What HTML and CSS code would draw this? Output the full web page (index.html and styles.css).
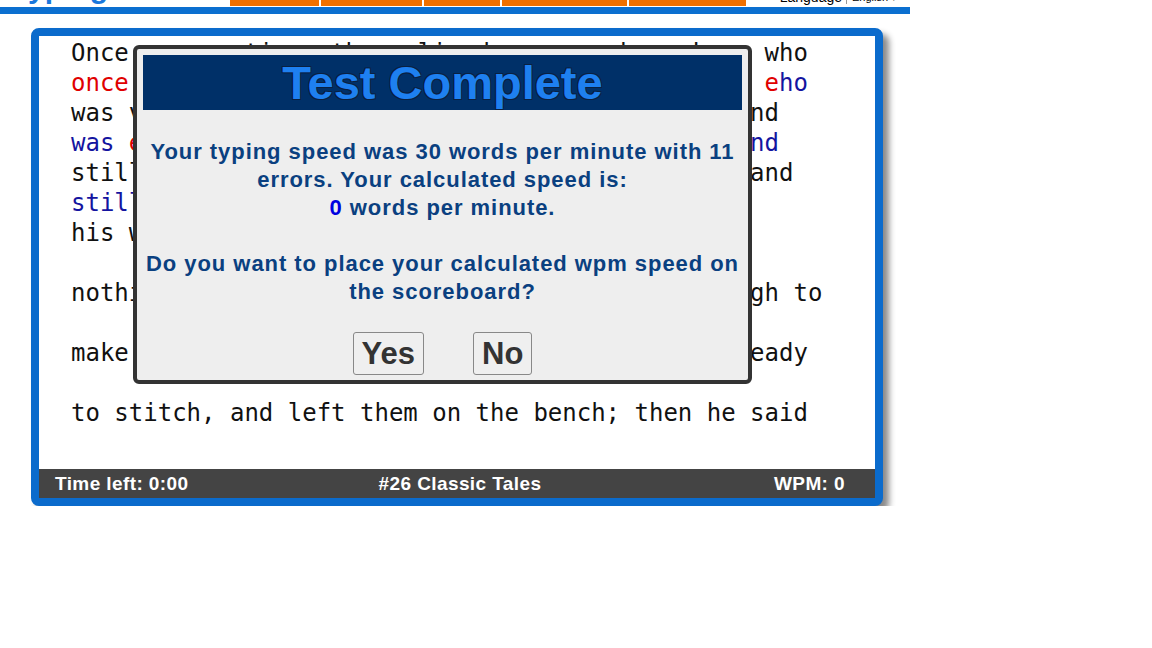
FILE: index.html
```html
<!DOCTYPE html>
<html lang="en">
<head>
    <meta charset="UTF-8">
    <title>Typing Test</title>
    <link rel="stylesheet" href="styles.css">
</head>
<body>
    <div class="site-header">
        <div class="top-row">
            <div class="logo">typingtest</div>
            <div class="nav">
                <span class="tab tab-1">Home</span>
                <span class="tab tab-2">Typing Test</span>
                <span class="tab tab-3">Games</span>
                <span class="tab tab-4">Scoreboard</span>
                <span class="tab tab-5">Lessons</span>
            </div>
            <div class="lang">
                <span class="lang-label">Language</span>
                <span class="lang-select">English &#9662;</span>
            </div>
        </div>
        <div class="blue-bar"></div>
    </div>

    <div class="test-box">
        <div class="test-text">
            <div class="line">Once upon a time, there lived a poor shoemaker, who</div>
            <div class="line typed"><span class="err">once</span> upon a time, there lived a poor shoemaker, <span class="err">e</span>ho</div>
            <div class="line">was very honest, and worked very hard indeed, and</div>
            <div class="line typed">was <span class="err">e</span>ery honest, and worked very hard indeed, and</div>
            <div class="line">still he could never earn enough to live upon, and</div>
            <div class="line typed">still</div>
            <div class="line">his wife and he had but little to eat;</div>
            <div class="line"></div>
            <div class="line">nothing was left but a bit of leather just enough to</div>
            <div class="line"></div>
            <div class="line">make one pair of shoes. He cut these out, all ready</div>
            <div class="line"></div>
            <div class="line">to stitch, and left them on the bench; then he said</div>
        </div>
        <div class="status-bar">
            <span class="time-left">Time left: 0:00</span>
            <span class="passage">#26 Classic Tales</span>
            <span class="wpm">WPM: 0</span>
        </div>

        <div class="modal">
            <h1 class="modal-title">Test Complete</h1>
            <p class="modal-text">
                Your typing speed was 30 words per minute with 11 errors. Your calculated speed is:<br>
                <span class="score">0</span> words per minute.
            </p>
            <p class="modal-text">Do you want to place your calculated wpm speed on the scoreboard?</p>
            <div class="modal-buttons">
                <button class="btn">Yes</button>
                <button class="btn">No</button>
            </div>
        </div>
    </div>
</body>
</html>
```

FILE: styles.css
```css
* {
    margin: 0;
    padding: 0;
    box-sizing: border-box;
}

body {
    font-family: 'Liberation Sans', Arial, sans-serif;
    background-color: #ffffff;
    color: #000;
}

/* cabecera */
.site-header {
    width: 910px;
}

.top-row {
    display: flex;
    align-items: flex-end;
    height: 7px;
    overflow: hidden;
}

.logo {
    width: 230px;
    padding-left: 18px;
    font-size: 30px;
    font-weight: bold;
    line-height: 30px;
    color: #1a78dc;
    margin-bottom: 4px;
}

.nav {
    display: flex;
    gap: 2px;
    height: 6px;
    align-self: flex-start;
}

.tab {
    background-color: #f07000;
    color: #f07000;
    font-size: 12px;
    height: 6px;
    overflow: hidden;
}

.tab-1 { width: 89px; }
.tab-2 { width: 101px; }
.tab-3 { width: 76px; }
.tab-4 { width: 125px; }
.tab-5 { width: 117px; }

.lang {
    margin-left: auto;
    display: flex;
    align-items: flex-end;
    font-size: 14px;
    line-height: 14px;
    margin-bottom: 3px;
}

.lang-label {
    margin-right: 4px;
}

.lang-select {
    border-left: 1px solid #999;
    padding: 0 4px 0 5px;
    font-size: 11px;
    width: 64px;
}

.blue-bar {
    height: 7px;
    background-color: #0b6fd0;
}

/* caja del test */
.test-box {
    position: relative;
    width: 852px;
    margin: 14px 0 0 31px;
    border: 8px solid #0b6bcc;
    border-radius: 8px;
    background-color: #fff;
    box-shadow: 6px 6px 6px #8a8a8a;
}

.test-text {
    padding: 2px 0 41px 32px;
    font-family: 'DejaVu Sans Mono', monospace;
    font-size: 24px;
    line-height: 30px;
    color: #111;
}

.line {
    height: 30px;
    white-space: pre;
}

.typed {
    color: #1414a0;
}

.err {
    color: #e00000;
}

.status-bar {
    display: grid;
    grid-template-columns: 1fr 1fr 1fr;
    align-items: center;
    height: 29px;
    padding: 0 30px 0 16px;
    background-color: #444;
    color: #fff;
    font-size: 19px;
    font-weight: bold;
    letter-spacing: 0.4px;
}

.passage {
    text-align: center;
    padding-left: 20px;
    white-space: nowrap;
}

.wpm {
    text-align: right;
}

/* ventana de resultado */
.modal {
    position: absolute;
    left: 94px;
    top: 9px;
    width: 619px;
    height: 339px;
    border: 4px solid #333;
    border-radius: 6px;
    padding: 6px 6px 5px;
    background-color: #eee;
    text-align: center;
    display: flex;
    flex-direction: column;
}

.modal-title {
    height: 55px;
    line-height: 55px;
    background-color: #003068;
    color: #1e80f0;
    font-size: 47px;
    font-weight: bold;
    text-shadow: -1px -1px 0 #0a2040, 1px -1px 0 #0a2040, -1px 1px 0 #0a2040, 1px 1px 0 #0a2040;
}

.modal-text {
    margin-top: 28px;
    font-size: 22px;
    font-weight: bold;
    letter-spacing: 0.95px;
    line-height: 28px;
    color: #0a4080;
}

.score {
    color: #0000e0;
}

.modal-buttons {
    margin-top: auto;
    display: flex;
    justify-content: center;
    gap: 49px;
}

.btn {
    height: 43px;
    padding: 0 8px;
    font-family: 'Liberation Sans', Arial, sans-serif;
    font-size: 31px;
    font-weight: bold;
    color: #333;
    background-color: #efefef;
    border: 1px solid #888;
    border-radius: 3px;
}
```
